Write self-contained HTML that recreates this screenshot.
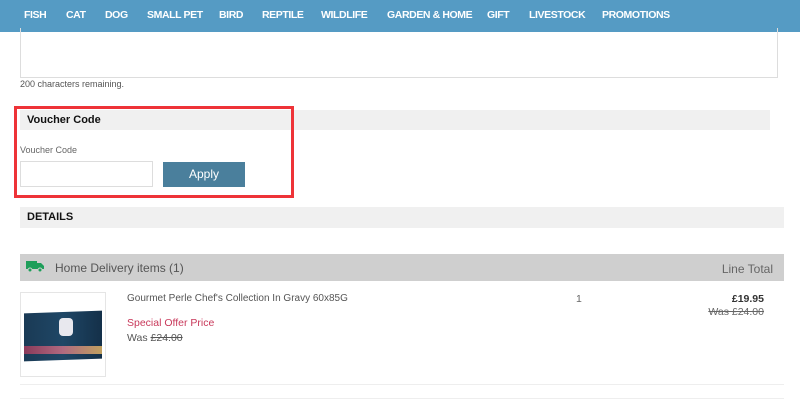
<!DOCTYPE html>
<html><head><style>
*{margin:0;padding:0;box-sizing:border-box}
body{width:800px;height:400px;overflow:hidden;background:#fff;font-family:"Liberation Sans",sans-serif;position:relative;color:#555}
.a{position:absolute}
.nav{left:0;top:0;width:800px;height:32px;background:#559bc4}
.nav span{position:absolute;top:9px;color:#fff;font-weight:bold;font-size:10.5px;letter-spacing:-0.4px}
</style></head><body>
<div class="a nav">
<span style="left:24px">FISH</span><span style="left:66px">CAT</span><span style="left:105px">DOG</span><span style="left:147px">SMALL PET</span><span style="left:219px">BIRD</span><span style="left:262px">REPTILE</span><span style="left:321px">WILDLIFE</span><span style="left:387px">GARDEN &amp; HOME</span><span style="left:487px">GIFT</span><span style="left:529px">LIVESTOCK</span><span style="left:602px">PROMOTIONS</span>
</div>
<div class="a" style="left:20px;top:28px;width:758px;height:50px;border:1px solid #ddd;border-top:none"></div>
<div class="a" style="left:20px;top:79px;font-size:9px;color:#555">200 characters remaining.</div>
<div class="a" style="left:20px;top:110px;width:750px;height:20px;background:#f0f0f0"></div>
<div class="a" style="left:27px;top:114px;font-size:11px;font-weight:bold;color:#111">Voucher Code</div>
<div class="a" style="left:14px;top:106px;width:280px;height:92px;border:3px solid #ee3338"></div>
<div class="a" style="left:20px;top:145px;font-size:9px;color:#666">Voucher Code</div>
<div class="a" style="left:20px;top:161px;width:133px;height:26px;border:1px solid #ddd"></div>
<div class="a" style="left:163px;top:162px;width:82px;height:25px;background:#4a7f9c;color:#fff;font-size:12px;text-align:center;line-height:25px">Apply</div>
<div class="a" style="left:20px;top:207px;width:764px;height:21px;background:#f0f0f0"></div>
<div class="a" style="left:27px;top:211px;font-size:11px;font-weight:bold;color:#111">DETAILS</div>
<div class="a" style="left:20px;top:254px;width:764px;height:27px;background:#cfcfcf"></div>
<svg class="a" style="left:26px;top:260px" width="19" height="13" viewBox="0 0 19 13"><rect x="0" y="1" width="11" height="8" fill="#1e9e5a"/><path d="M11 3h4l3 3v3h-7z" fill="#1e9e5a"/><circle cx="4" cy="10" r="2" fill="#1e9e5a" stroke="#cfcfcf"/><circle cx="14" cy="10" r="2" fill="#1e9e5a" stroke="#cfcfcf"/></svg>
<div class="a" style="left:55px;top:261px;font-size:12px;color:#555">Home Delivery items (1)</div>
<div class="a" style="left:673px;top:262px;width:100px;text-align:right;font-size:12px;line-height:14px;color:#666">Line Total</div>
<div class="a" style="left:20px;top:292px;width:86px;height:85px;border:1px solid #e5e5e5"></div>
<div class="a" style="left:24px;top:312px;width:78px;height:48px;background:linear-gradient(90deg,#1a3a55,#1f4766 50%,#143049);transform:skewY(-2deg)"></div>
<div class="a" style="left:24px;top:346px;width:78px;height:8px;background:linear-gradient(90deg,#8a3a5a,#b06a80,#c0a060)"></div>
<div class="a" style="left:59px;top:318px;width:14px;height:18px;background:#e8e8ee;border-radius:4px"></div>
<div class="a" style="left:127px;top:293px;font-size:10px;color:#555">Gourmet Perle Chef's Collection In Gravy 60x85G</div>
<div class="a" style="left:127px;top:317px;font-size:10.5px;color:#c8385a">Special Offer Price</div>
<div class="a" style="left:127px;top:332px;font-size:10.5px;color:#555">Was <s>£24.00</s></div>
<div class="a" style="left:576px;top:293px;font-size:10.5px;color:#666">1</div>
<div class="a" style="left:664px;top:293px;width:100px;text-align:right;font-size:10.5px;font-weight:bold;color:#333">£19.95</div>
<div class="a" style="left:664px;top:306px;width:100px;text-align:right;font-size:10.5px;color:#666"><s>Was £24.00</s></div>
<div class="a" style="left:20px;top:384px;width:764px;height:1px;background:#eee"></div>
<div class="a" style="left:20px;top:398px;width:764px;height:1px;background:#eee"></div>
</body></html>
